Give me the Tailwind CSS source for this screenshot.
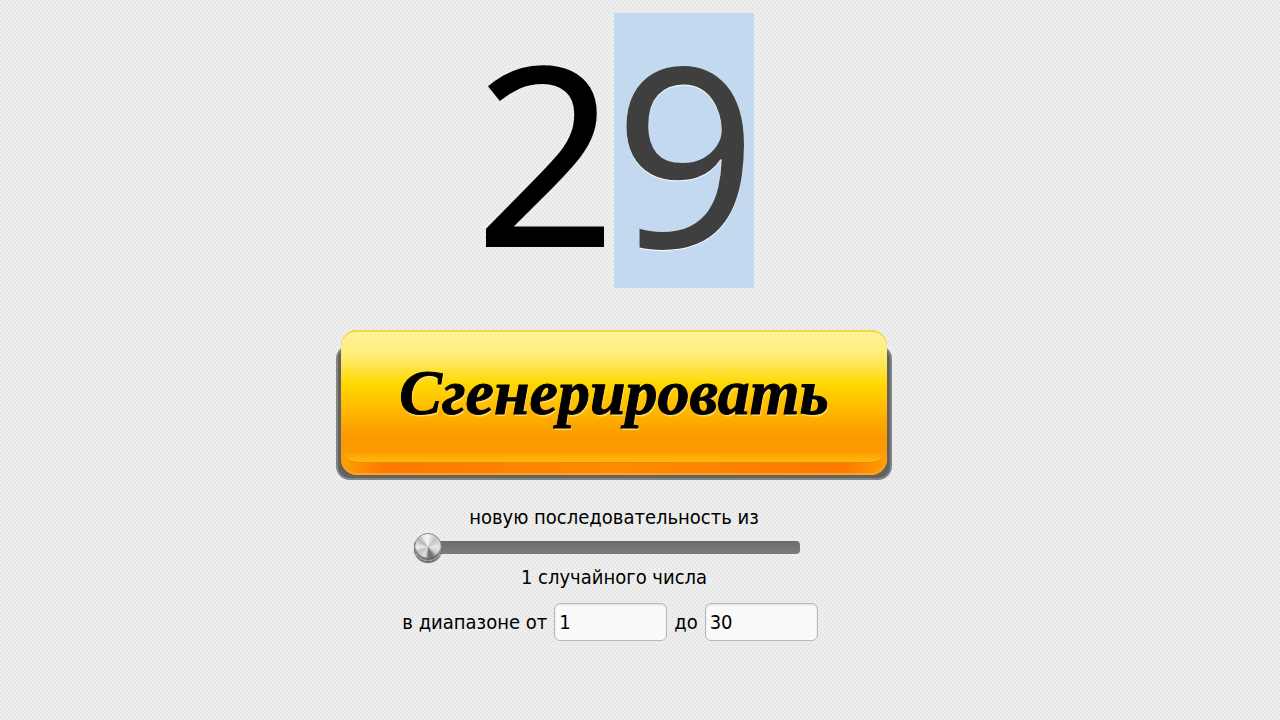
<!doctype html>
<html lang="ru">
<head>
    <meta charset="UTF-8">
    <meta name="viewport" content="width=device-width, initial-scale=1">
    <title>Генератор случайных чисел</title>
    <script src="https://cdn.jsdelivr.net/npm/@tailwindcss/browser@4"></script>
</head>
<body class="min-h-screen bg-[#efefef] bg-[radial-gradient(circle_at_1px_1px,#e5e5e5_1px,transparent_1px),radial-gradient(circle_at_3px_3px,#e9e9e9_1px,transparent_1px)] bg-size-[4px_4px] pr-[52px] font-['DejaVu_Sans_Condensed','DejaVu_Sans',sans-serif] text-xl text-black">
  <main class="flex flex-col items-center pt-[13px]">
    <!-- generated number -->
    <output class="flex font-['Noto_Sans',sans-serif] text-[250px] leading-[275px]">
      <span class="w-[140px]">2</span>
      <span class="w-[140px] bg-[#c2d9f0] text-[#3f3f3f] [text-shadow:0_1px_1px_#fff]">9</span>
    </output>

    <button type="button" class="relative mt-[42px] h-[150px] w-[556px] px-[5px] pb-[5px]">
      <span class="absolute inset-x-0 top-[15px] bottom-0 rounded-[14px] border-2 border-[#858585] bg-[#626262]"></span>
      <span class="relative block h-full rounded-[16px] bg-[linear-gradient(90deg,#ffa000,#ff7800_8%,#ff8a00_50%,#ff7800_92%,#ffa000)] pb-[12px] shadow-[inset_0_-2px_1px_#ffa51c]">
        <span class="flex h-full items-center justify-center rounded-[16px] border-t-2 border-b border-t-[#f2da3c] border-b-[#e88c00] bg-[linear-gradient(#fff39c_0%,#ffec78_18%,#ffd800_40%,#ffbd00_57%,#fb9a00_80%,#fb9b00_92%,#ffb60c_99%)] pb-2 font-['Liberation_Serif',serif] text-[64px] leading-none font-bold italic [-webkit-text-stroke:1px_#000] [text-shadow:1px_2px_1px_#ffdc70]">Сгенерировать</span>
      </span>
    </button>

    <label for="count" class="mt-[22px] leading-[30px]">новую последовательность из</label>
    <input id="count" type="range" min="1" max="30" value="1" class="mr-[14px] h-[30px] w-[386px] appearance-none bg-transparent [&::-webkit-slider-runnable-track]:h-[13px] [&::-webkit-slider-runnable-track]:rounded-[4px] [&::-webkit-slider-runnable-track]:bg-[linear-gradient(#6c6c6c,#7d7d7d)] [&::-webkit-slider-thumb]:-mt-[8px] [&::-webkit-slider-thumb]:size-[28px] [&::-webkit-slider-thumb]:appearance-none [&::-webkit-slider-thumb]:rounded-full [&::-webkit-slider-thumb]:border [&::-webkit-slider-thumb]:border-[#8a8a8a] [&::-webkit-slider-thumb]:bg-[conic-gradient(#f4f4f4,#c4c4c4_12%,#e6e6e6_25%,#d0d0d0_35%,#707070_43%,#777_49%,#dedede_55%,#c2c2c2_68%,#efefef_75%,#b4b4b4_86%,#ededed_94%,#f4f4f4)] [&::-webkit-slider-thumb]:shadow-[0_2px_1px_#666,inset_0_-2px_1px_#666]">
    <p class="leading-[30px]">1 случайного числа</p>
    <div class="mt-[11px] mr-[8px] flex items-center gap-[7px]">
      <label for="from">в диапазоне от</label>
      <input id="from" type="text" inputmode="numeric" value="1" class="h-[38px] w-[113px] rounded-[6px] border border-[#b8b8b8] bg-[#fafafa] px-1 shadow-[inset_0_1px_2px_#ddd]">
      <label for="to">до</label>
      <input id="to" type="text" inputmode="numeric" value="30" class="h-[38px] w-[113px] rounded-[6px] border border-[#b8b8b8] bg-[#fafafa] px-1 shadow-[inset_0_1px_2px_#ddd]">
    </div>
  </main>
</body>
</html>
